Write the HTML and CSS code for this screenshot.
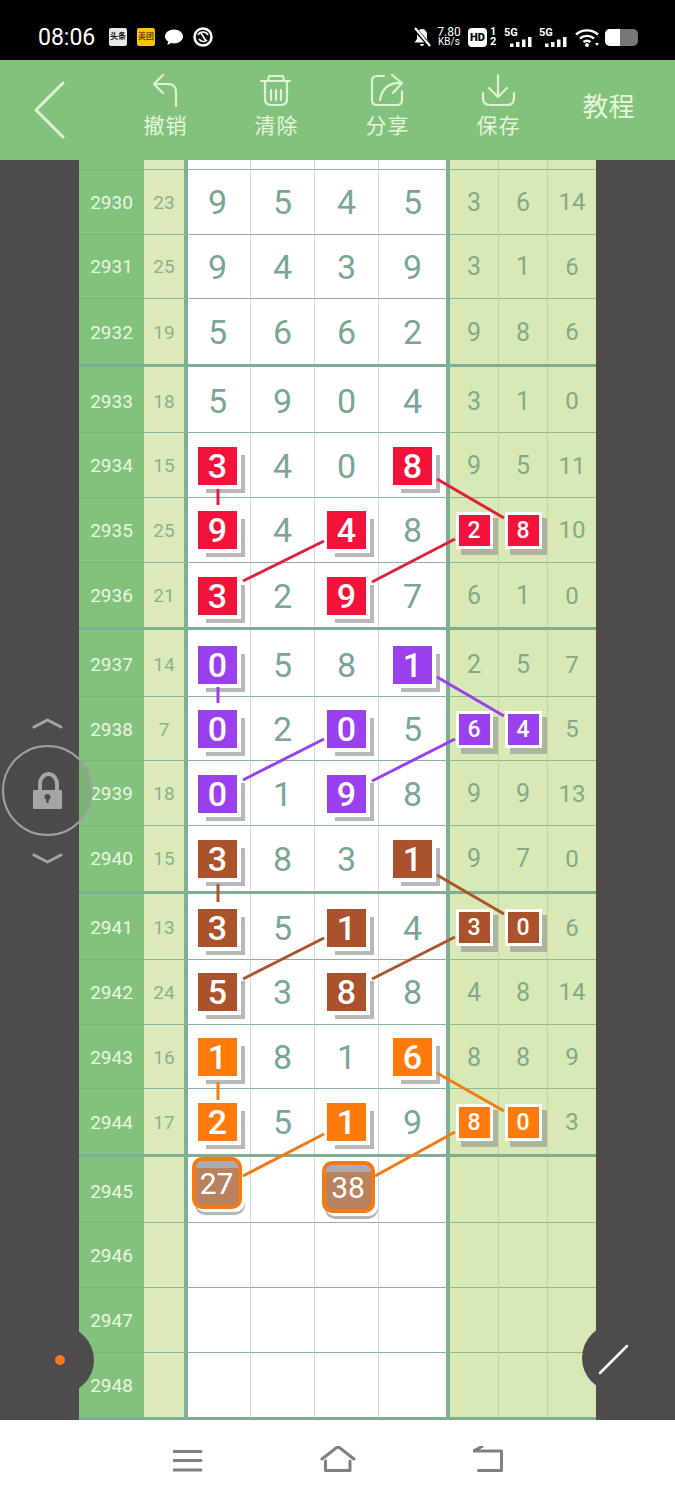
FILE: index.html
```html
<!DOCTYPE html>
<html lang="zh-CN">
<head>
    <meta charset="UTF-8">
    <meta name="viewport" content="width=device-width, initial-scale=1.0">
    <title>教程</title>
    <link rel="stylesheet" href="styles.css">
</head>
<body>
    <div class="statusbar">
        <span class="clock">08:06</span>
        <span class="app-icon toutiao">头条</span>
        <span class="app-icon meituan">美团</span>
        <svg class="app-svg" viewBox="0 0 18 18"><path d="M9 1.500c5 0 9 3 9 7s-4 7-9 7c-1 0-2-.1-2.900-.4L2.500 17l.6-3.500C1.200 12.200 0 10.500 0 8.500c0-4 4-7 9-7z" fill="#fff"/></svg>
        <svg class="app-svg round" viewBox="0 0 20 20"><circle cx="10" cy="10" r="8.500" fill="#111" stroke="#fff" stroke-width="2.500"/><path d="M5 8c2-4 8-4 10 0M6 12c2 3 6 3 8 1M8 6l5 8" fill="none" stroke="#fff" stroke-width="1.500"/></svg>

        <div class="status-right">
            <svg class="bell" viewBox="0 0 18 20"><path d="M9 2c3 0 5 2.500 5 5.500V12l2.500 3.500h-15L4 12V7.500C4 4.500 6 2 9 2zM7 17h4c0 1-1 2-2 2s-2-1-2-2z" fill="#fff"/><path d="M1 1l16 18" stroke="#000" stroke-width="4"/><path d="M2 1l15 18" stroke="#fff" stroke-width="2"/></svg>
            <span class="speed"><span>7.80</span><span class="unit">KB/s</span></span>
            <span class="hd">HD</span>
            <span class="sim"><span>1</span><span>2</span></span>
            <span class="net"><span class="net-label">5G</span><svg viewBox="0 0 22 10"><path d="M0 6.500h3.500V10H0zM6 5h3.500v5H6zM12 2.500h3.500V10H12zM18 0h3.500v10H18z" fill="#fff"/></svg></span>
            <span class="net"><span class="net-label">5G</span><svg viewBox="0 0 22 10"><path d="M0 6.500h3.500V10H0zM6 5h3.500v5H6zM12 2.500h3.500V10H12zM18 0h3.500v10H18z" fill="#fff"/></svg></span>
            <svg class="wifi" viewBox="0 0 24 19"><g fill="none" stroke="#fff" stroke-width="2.400"><path d="M1 6.500c6-5.500 16-5.500 22 0"/><path d="M5 10.500c4-3.500 10-3.500 14 0"/><path d="M8.500 14c2-1.500 5-1.500 7 0"/></g><circle cx="12" cy="17" r="2" fill="#fff"/><path d="M20 15h4l-2 3z" fill="#fff"/></svg>
            <span class="battery"><span class="battery-level"></span></span>
        </div>
    </div>

    <div class="appbar">
        <a class="back">
            <svg viewBox="33 80 33 60" width="33" height="60"><path d="M63 83L36 110l27 27" /></svg>
        </a>
        <a class="tool">
            <svg viewBox="147 73 36 36"><path d="M163 75l-9 9 9 9M154 84h14q8 0 8 8v14"/></svg>
            <span>撤销</span>
        </a>
        <a class="tool">
            <svg viewBox="258 73 36 36"><path d="M261 81h29M268 81l1-5h14l1 5M265 81v18q0 6 6 6h10q6 0 6-6V81M271 90v10M276 90v10M281 90v10"/></svg>
            <span>清除</span>
        </a>
        <a class="tool">
            <svg viewBox="369 73 36 36"><path d="M384 76h-7q-5 0-5 5v19q0 5 5 5h20q5 0 5-5v-9M392 75l10 8-9 10M402 83q-19-1-22 17"/></svg>
            <span>分享</span>
        </a>
        <a class="tool">
            <svg viewBox="479 73 36 36"><path d="M497 75v22M488 88l9 9 9-9M482 93v5q0 7 7 7h17q7 0 7-7v-5"/></svg>
            <span>保存</span>
        </a>
        <a class="tool tool-text">教程</a>
    </div>

    <div class="stage">
        <div class="board">
            <div class="row stub"><span class="id"></span><span class="sum"></span><span class="d"></span><span class="d"></span><span class="d"></span><span class="d"></span><span class="s"></span><span class="s"></span><span class="s"></span></div>

            <div class="row"><span class="id">2930</span><span class="sum">23</span><span class="d">9</span><span class="d">5</span><span class="d">4</span><span class="d">5</span><span class="s">3</span><span class="s">6</span><span class="s">14</span></div>
            <div class="row"><span class="id">2931</span><span class="sum">25</span><span class="d">9</span><span class="d">4</span><span class="d">3</span><span class="d">9</span><span class="s">3</span><span class="s">1</span><span class="s">6</span></div>
            <div class="row end"><span class="id">2932</span><span class="sum">19</span><span class="d">5</span><span class="d">6</span><span class="d">6</span><span class="d">2</span><span class="s">9</span><span class="s">8</span><span class="s">6</span></div>

            <div class="row start"><span class="id">2933</span><span class="sum">18</span><span class="d">5</span><span class="d">9</span><span class="d">0</span><span class="d">4</span><span class="s">3</span><span class="s">1</span><span class="s">0</span></div>
            <div class="row"><span class="id">2934</span><span class="sum">15</span><span class="d"><b class="box red">3</b></span><span class="d">4</span><span class="d">0</span><span class="d"><b class="box red">8</b></span><span class="s">9</span><span class="s">5</span><span class="s">11</span></div>
            <div class="row"><span class="id">2935</span><span class="sum">25</span><span class="d"><b class="box red">9</b></span><span class="d">4</span><span class="d"><b class="box red">4</b></span><span class="d">8</span><span class="s"><b class="chip red">2</b></span><span class="s"><b class="chip red">8</b></span><span class="s">10</span></div>
            <div class="row end"><span class="id">2936</span><span class="sum">21</span><span class="d"><b class="box red">3</b></span><span class="d">2</span><span class="d"><b class="box red">9</b></span><span class="d">7</span><span class="s">6</span><span class="s">1</span><span class="s">0</span></div>

            <div class="row start"><span class="id">2937</span><span class="sum">14</span><span class="d"><b class="box purple">0</b></span><span class="d">5</span><span class="d">8</span><span class="d"><b class="box purple">1</b></span><span class="s">2</span><span class="s">5</span><span class="s">7</span></div>
            <div class="row"><span class="id">2938</span><span class="sum">7</span><span class="d"><b class="box purple">0</b></span><span class="d">2</span><span class="d"><b class="box purple">0</b></span><span class="d">5</span><span class="s"><b class="chip purple">6</b></span><span class="s"><b class="chip purple">4</b></span><span class="s">5</span></div>
            <div class="row"><span class="id">2939</span><span class="sum">18</span><span class="d"><b class="box purple">0</b></span><span class="d">1</span><span class="d"><b class="box purple">9</b></span><span class="d">8</span><span class="s">9</span><span class="s">9</span><span class="s">13</span></div>
            <div class="row end"><span class="id">2940</span><span class="sum">15</span><span class="d"><b class="box brown">3</b></span><span class="d">8</span><span class="d">3</span><span class="d"><b class="box brown">1</b></span><span class="s">9</span><span class="s">7</span><span class="s">0</span></div>

            <div class="row start"><span class="id">2941</span><span class="sum">13</span><span class="d"><b class="box brown">3</b></span><span class="d">5</span><span class="d"><b class="box brown">1</b></span><span class="d">4</span><span class="s"><b class="chip brown">3</b></span><span class="s"><b class="chip brown">0</b></span><span class="s">6</span></div>
            <div class="row"><span class="id">2942</span><span class="sum">24</span><span class="d"><b class="box brown">5</b></span><span class="d">3</span><span class="d"><b class="box brown">8</b></span><span class="d">8</span><span class="s">4</span><span class="s">8</span><span class="s">14</span></div>
            <div class="row"><span class="id">2943</span><span class="sum">16</span><span class="d"><b class="box orange">1</b></span><span class="d">8</span><span class="d">1</span><span class="d"><b class="box orange">6</b></span><span class="s">8</span><span class="s">8</span><span class="s">9</span></div>
            <div class="row end"><span class="id">2944</span><span class="sum">17</span><span class="d"><b class="box orange">2</b></span><span class="d">5</span><span class="d"><b class="box orange">1</b></span><span class="d">9</span><span class="s"><b class="chip orange">8</b></span><span class="s"><b class="chip orange">0</b></span><span class="s">3</span></div>

            <div class="row start"><span class="id">2945</span><span class="sum"></span><span class="d"><b class="pending first">27</b></span><span class="d"></span><span class="d"><b class="pending second">38</b></span><span class="d"></span><span class="s"></span><span class="s"></span><span class="s"></span></div>
            <div class="row"><span class="id">2946</span><span class="sum"></span><span class="d"></span><span class="d"></span><span class="d"></span><span class="d"></span><span class="s"></span><span class="s"></span><span class="s"></span></div>
            <div class="row"><span class="id">2947</span><span class="sum"></span><span class="d"></span><span class="d"></span><span class="d"></span><span class="d"></span><span class="s"></span><span class="s"></span><span class="s"></span></div>
            <div class="row end"><span class="id">2948</span><span class="sum"></span><span class="d"></span><span class="d"></span><span class="d"></span><span class="d"></span><span class="s"></span><span class="s"></span><span class="s"></span></div>
        </div>

        <!-- lines and floating controls, viewBox uses screen coordinates -->
        <svg class="overlay" viewBox="0 160 675 1260">
            <g class="link" stroke="#e0203f">
                <path d="M218 489v16M243 581l81-40M437 479l67 39M372 582l83-43"/>
            </g>
            <g class="link" stroke="#9b40ef">
                <path d="M218 687v16M243 780l81-41M437 677l67 39M372 781l83-42"/>
            </g>
            <g class="link" stroke="#a9552e">
                <path d="M218 884v18M243 979l81-41M437 875l67 39M372 979l83-42"/>
            </g>
            <g class="link" stroke="#f57a14">
                <path d="M218 1082v18M243 1176l81-42M437 1073l67 38M375 1176l80-44"/>
            </g>

            <path class="chevron" d="M34 727l13.500-7 13.500 7M34 855l13.500 7 13.500-7"/>
            <circle class="lock-ring" cx="47.500" cy="790.500" r="44.500"/>
            <path class="lock-shackle" d="M40 792v-8a8.500 10 0 0 1 17 0v8"/>
            <rect class="lock-body" x="33" y="790" width="29" height="19" rx="1"/>
            <circle class="lock-hole" cx="47.500" cy="797" r="3"/>
            <path class="lock-hole" d="M46.300 798h2.400v5h-2.400z"/>

            <circle class="side-dial" cx="60" cy="1360" r="34"/>
            <circle class="side-dot" cx="60" cy="1360" r="5"/>
            <circle class="side-dial" cx="616" cy="1358" r="34"/>
            <path class="side-slash" d="M600 1373l27-27"/>
        </svg>
    </div>

    <div class="navbar">
        <svg width="30" height="26" viewBox="173 1446 30 26"><path d="M174 1451.500h27M174 1460.500h27M174 1470h27"/></svg>
        <svg width="36" height="26" viewBox="320 1446 36 26"><path d="M322 1459l16-12.500 16 12.500M325.500 1461v9.500h24.500v-9.500"/></svg>
        <svg width="32" height="26" viewBox="473 1446 32 26"><path d="M482 1446.500l-8.500 4.500h28v19.500h-23"/></svg>
    </div>
</body>
</html>
```

FILE: styles.css
```css
* {
    box-sizing: border-box;
}

body {
    margin: 0;
    width: 675px;
    height: 1500px;
    overflow: hidden;
    background-color: #fff;
    font-family: Roboto, "Noto Sans CJK SC", sans-serif;
}

/* status bar */
.statusbar {
    height: 60px;
    background-color: #000;
    color: #fff;
    display: flex;
    align-items: center;
    padding: 14px 37px 0 38px;
}

.clock {
    font-size: 23px;
    width: 71px;
}

.app-icon {
    width: 18px;
    height: 18px;
    margin-right: 10px;
    font-size: 8px;
    font-weight: 700;
    line-height: 18px;
    text-align: center;
    white-space: nowrap;
    overflow: hidden;
    border-radius: 2px;
}

.toutiao {
    background-color: #e8e8e8;
    color: #111;
}

.meituan {
    background-color: #fcc30c;
    color: #6b4a00;
}

.app-svg {
    width: 18px;
    height: 18px;
    margin-right: 10px;
}

.app-svg.round {
    width: 20px;
    height: 20px;
}

.status-right {
    margin-left: auto;
    display: flex;
    align-items: center;
}

.bell {
    width: 18px;
    height: 20px;
    margin-right: 6px;
}

.speed {
    display: flex;
    flex-direction: column;
    align-items: center;
    font-size: 12px;
    line-height: 10px;
    width: 24px;
    margin-right: 7px;
}

.speed .unit {
    font-size: 10px;
}

.hd {
    width: 19px;
    height: 19px;
    border-radius: 4px;
    background-color: #fff;
    color: #000;
    font-size: 11px;
    font-weight: 900;
    line-height: 19px;
    text-align: center;
}

.sim {
    display: flex;
    flex-direction: column;
    width: 7px;
    margin: 0 7px 0 3px;
    font-size: 11px;
    font-weight: 700;
    line-height: 10px;
}

.net {
    display: flex;
    flex-direction: column;
    width: 28px;
    margin-right: 7px;
}

.net-label {
    font-size: 11px;
    font-weight: 700;
    line-height: 9px;
}

.net svg {
    width: 22px;
    height: 10px;
    margin-left: 6px;
}

.wifi {
    width: 24px;
    height: 19px;
    margin: 0 6px 0 1px;
}

.battery {
    width: 33px;
    height: 17px;
    border-radius: 5px;
    background-color: #777;
    overflow: hidden;
}

.battery-level {
    display: block;
    width: 15px;
    height: 17px;
    background-color: #fff;
}

/* app bar */
.appbar {
    height: 100px;
    background-color: #82c27d;
    color: #e6f5db;
    display: flex;
}

.back {
    width: 109px;
    padding: 20px 0 0 33px;
}

.back svg {
    display: block;
}

.appbar svg path {
    fill: none;
    stroke: #e0f2d6;
    stroke-width: 2.200px;
    stroke-linecap: round;
    stroke-linejoin: round;
}

.back svg path {
    stroke-width: 3px;
}

.tool {
    width: 111px;
    display: flex;
    flex-direction: column;
    align-items: center;
    padding-top: 13px;
    font-size: 21px;
    letter-spacing: 1px;
}

.tool svg {
    width: 36px;
    height: 36px;
}

.tool span {
    margin-top: 2px;
    padding-left: 2px;
    line-height: 30px;
}

.tool-text {
    padding-top: 29px;
    font-size: 26px;
    letter-spacing: 0;
    line-height: 36px;
}

/* board */
.stage {
    position: relative;
    height: 1260px;
    background-color: #4d4b4b;
    overflow: hidden;
}

.board {
    width: 517px;
    margin: 0 auto;
}

.row {
    display: grid;
    grid-template-columns: 65px 44px 63px 64px 64px 71px 49px 49px 48px;
    height: 64.67px;
}

.row.stub {
    height: 10px;
}

.row.end {
    height: 67.67px;
    border-bottom: 3px solid #7fae92;
}

.row.start {
    height: 66.4px;
}

.row > span {
    display: flex;
    align-items: center;
    justify-content: center;
    padding-top: 1px;
    border-bottom: 1.5px solid #8fb3a3;
}

.row.start > span {
    padding-top: 3px;
}

.row.end > span {
    border-bottom: 0;
}

.row > .id {
    background-color: #82c27d;
    color: #eaf7e0;
    font-size: 19px;
    border-bottom-color: #78b678;
}

.sum {
    background-color: #dceab9;
    color: #8cb08e;
    font-size: 19px;
    border-right: 4px solid #7fae92;
}

.d {
    background-color: #fff;
    color: #7ba594;
    font-size: 34px;
    border-right: 1.5px solid #cddad5;
}

.d:nth-child(3) {
    padding-right: 3px;
}

.d:nth-child(6) {
    border-right: 4px solid #7fae92;
}

.row > .s {
    background-color: #d9e9b6;
    color: #84a98a;
    font-size: 25px;
    border-right: 1.5px solid #bfd5a6;
    border-bottom-color: #93b98a;
}

.row > .s:last-child {
    border-right: 0;
    font-size: 24px;
}

.box,
.chip {
    display: flex;
    align-items: center;
    justify-content: center;
    color: #fff;
    font-weight: 500;
}

.box {
    width: 39px;
    height: 38px;
    font-size: 34px;
    box-shadow: 4px 4px 0 #fff, 8px 8px 0 #b8b8b8;
}

.chip {
    width: 31px;
    height: 31px;
    font-size: 23px;
    box-shadow: 0 0 0 3px #fff, 5px 6px 0 3px #adb59f;
}

.red {
    background-color: #f2123a;
}

.purple {
    background-color: #9b40ef;
}

.brown {
    background-color: #a9522b;
}

.orange {
    background-color: #ff7a0a;
}

.pending {
    display: flex;
    align-items: center;
    justify-content: center;
    flex-shrink: 0;
    border: 4px solid #f57a14;
    border-radius: 10px;
    color: #fff;
    font-size: 30px;
    font-weight: 400;
    background: linear-gradient(#a9abb0 0 7px, #b8825f 7px);
    box-shadow: 3px 3px 0 #fff, 3px 6px 0 #b5b5b5;
}

.pending.first {
    width: 50px;
    height: 52px;
    margin: -9px 2px 7px 0;
}

.pending.second {
    width: 53px;
    height: 52px;
    margin: -4px 0 4px 3px;
}

/* overlay */
.overlay {
    position: absolute;
    left: 0;
    top: 0;
    width: 675px;
    height: 1260px;
    pointer-events: none;
}

.link path {
    fill: none;
    stroke-width: 3px;
}

.chevron {
    fill: none;
    stroke: #a5a5a5;
    stroke-width: 3px;
    stroke-linecap: round;
    stroke-linejoin: round;
}

.lock-ring {
    fill: rgba(77, 75, 75, 0.12);
    stroke: #a0a0a0;
    stroke-width: 2px;
}

.lock-shackle {
    fill: none;
    stroke: #a5a5a5;
    stroke-width: 4px;
}

.lock-body {
    fill: #a5a5a5;
}

.lock-hole {
    fill: #4d4b4b;
}

.side-dial {
    fill: #4d4b4b;
}

.side-dot {
    fill: #f57a14;
}

.side-slash {
    stroke: #fff;
    stroke-width: 2.500px;
    stroke-linecap: round;
}

/* bottom nav */
.navbar {
    height: 80px;
    background-color: #fff;
    display: flex;
    align-items: flex-start;
    gap: 117px;
    padding: 26px 0 0 173px;
}

.navbar svg path {
    fill: none;
    stroke: #808080;
    stroke-width: 3px;
    stroke-linecap: round;
    stroke-linejoin: round;
}
```
